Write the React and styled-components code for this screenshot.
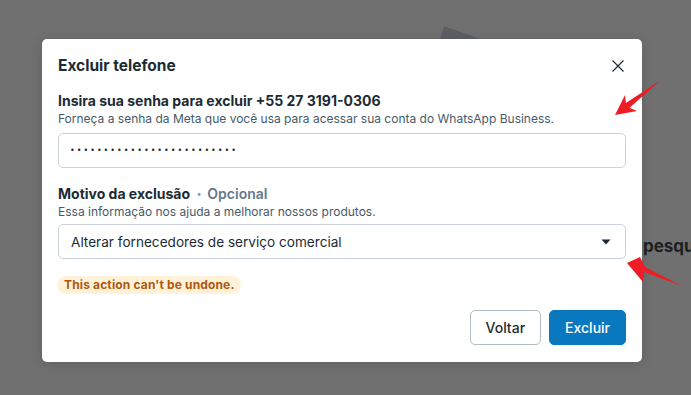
import React from 'react';
import styled, { createGlobalStyle } from 'styled-components';

const GlobalStyle = createGlobalStyle`
  html, body {
    margin: 0;
    padding: 0;
    background: #707070;
  }
  body {
    font-family: Inter, Roboto, "Noto Sans", Arial, sans-serif;
    overflow: hidden;
  }
`;

const Page = styled.div`
  position: relative;
  width: 691px;
  height: 395px;
  overflow: hidden;
  background: #707070;
  padding: 39px 0 0 42px;
  box-sizing: border-box;
`;

const BackdropText = styled.span`
  position: absolute;
  left: 643px;
  top: 236px;
  font-size: 17px;
  font-weight: 700;
  color: #1d1f21;
  white-space: nowrap;
`;

const Overlay = styled.svg`
  position: absolute;
  left: 0;
  top: 0;
  pointer-events: none;
  z-index: ${(p) => p.$z};
`;

const Modal = styled.div`
  position: relative;
  z-index: 1;
  width: 600px;
  box-sizing: border-box;
  background: #fff;
  border-radius: 5px;
  padding: 16px 16px 17px;
  box-shadow: 0 2px 12px rgba(0, 0, 0, 0.15);
  color: #1c2b33;
`;

const Header = styled.div`
  display: flex;
  align-items: center;
  justify-content: space-between;
  height: 22px;
`;

const Title = styled.h2`
  margin: 0;
  font-size: 15.5px;
  font-weight: 700;
  line-height: 22px;
`;

const CloseButton = styled.button`
  display: flex;
  align-items: center;
  justify-content: center;
  width: 24px;
  height: 24px;
  margin-right: -4px;
  padding: 0;
  border: 0;
  background: none;
  color: #1c2b33;
`;

const Field = styled.div`
  display: flex;
  flex-direction: column;
  margin-top: ${(p) => p.$top}px;
`;

const Label = styled.div`
  display: flex;
  align-items: center;
  font-size: 14px;
  font-weight: 700;
  line-height: 20px;
`;

const Dot = styled.span`
  margin: 0 6px 0 7px;
  font-size: 9px;
  color: #8595a4;
`;

const Optional = styled.span`
  font-weight: 600;
  color: #67788a;
`;

const Hint = styled.div`
  font-size: 12px;
  line-height: 16px;
  color: #465a69;
`;

const Box = styled.div`
  display: flex;
  align-items: center;
  justify-content: space-between;
  height: 35px;
  margin-top: ${(p) => p.$top}px;
  box-sizing: border-box;
  border: 1px solid #cbd2d9;
  border-radius: 5px;
  padding: 0 14px 0 ${(p) => p.$left}px;
  font-size: 13.6px;
  color: #1c2b33;
`;

const Password = styled.input`
  width: 100%;
  border: 0;
  outline: none;
  padding: 0;
  font-family: "DejaVu Sans", sans-serif;
  font-size: 8px;
  letter-spacing: 2px;
  color: #1c2b33;
  background: transparent;
`;

const Badge = styled.span`
  align-self: flex-start;
  margin-top: 17px;
  margin-left: -1px;
  padding: 0 6px 0 7px;
  height: 18px;
  line-height: 18px;
  border-radius: 9px;
  background: #fff2d8;
  color: #b0570d;
  font-size: 12px;
  font-weight: 700;
  letter-spacing: 0.15px;
`;

const Footer = styled.div`
  display: flex;
  justify-content: flex-end;
  gap: 8px;
  margin-top: 16px;
`;

const Button = styled.button`
  height: 35px;
  padding: 0 15px;
  border-radius: 5px;
  font-family: Inter, Roboto, sans-serif;
  font-size: 14px;
  font-weight: 500;
  border: 1px solid ${(p) => (p.$primary ? '#0a78be' : '#b3bcc5')};
  background: ${(p) => (p.$primary ? '#0a78be' : '#fff')};
  color: ${(p) => (p.$primary ? '#fff' : '#1c2b33')};
`;

const Col = styled.div`
  display: flex;
  flex-direction: column;
`;

export default function App() {
  return (
    <>
      <GlobalStyle />
      <Page>
        <Overlay width="691" height="395" $z={0}>
          <polygon points="440,40 444,26 483,40" fill="#5b5f64" />
        </Overlay>
        <BackdropText>pesquisa</BackdropText>
        <Modal>
          <Header>
            <Title>Excluir telefone</Title>
            <CloseButton aria-label="Fechar">
              <svg width="14" height="14" viewBox="0 0 14 14">
                <path d="M1.5 1.5 L12.5 12.5 M12.5 1.5 L1.5 12.5" stroke="currentColor" strokeWidth="1.2" fill="none" />
              </svg>
            </CloseButton>
          </Header>
          <Col>
            <Field $top={14}>
              <Label>Insira sua senha para excluir +55 27 3191-0306</Label>
              <Hint>Forneça a senha da Meta que você usa para acessar sua conta do WhatsApp Business.</Hint>
              <Box $top={6} $left={11}>
                <Password type="password" readOnly value="abcdefghijklmnopqrstuvwxy" />
              </Box>
            </Field>
            <Field $top={16}>
              <Label>
                Motivo da exclusão<Dot>•</Dot><Optional>Opcional</Optional>
              </Label>
              <Hint>Essa informação nos ajuda a melhorar nossos produtos.</Hint>
              <Box $top={4} $left={12}>
                <span>Alterar fornecedores de serviço comercial</span>
                <svg width="10" height="6" viewBox="0 0 10 6">
                  <path d="M0.5 0.5 H9.5 L5 5.5 Z" fill="#1c2b33" />
                </svg>
              </Box>
            </Field>
            <Badge>This action can't be undone.</Badge>
          </Col>
          <Footer>
            <Button>Voltar</Button>
            <Button $primary>Excluir</Button>
          </Footer>
        </Modal>
        <Overlay width="691" height="395" $z={2}>
          <polygon points="615,115 637,111 629.5,107.7 661,80 625.9,102.9 625,95" fill="#ee1c24" />
          <polygon points="627,263 643,282 644,272 682,286 645,267 640,257" fill="#ee1c24" />
        </Overlay>
      </Page>
    </>
  );
}
